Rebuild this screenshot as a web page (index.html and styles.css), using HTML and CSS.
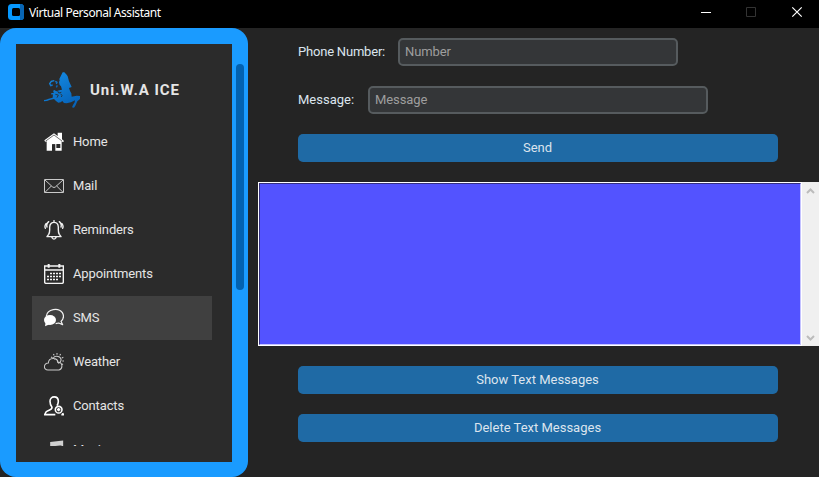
FILE: index.html
```html
<!DOCTYPE html>
<html lang="en">
<head>
<meta charset="utf-8">
<title>Virtual Personal Assistant</title>
<link rel="stylesheet" href="styles.css">
</head>
<body>
<header class="titlebar">
  <svg class="app-icon" viewBox="0 0 16 16"><rect width="16" height="16" rx="3.5" fill="#0698ff"/><path d="M12 0h.5A3.5 3.5 0 0 1 16 3.5v9a3.5 3.5 0 0 1-3.5 3.500H12z" fill="#0865b5"/><rect x="4" y="4" width="8" height="8" rx="1.500" fill="#000"/></svg>
  <h1 class="title">Virtual Personal Assistant</h1>
  <div class="controls">
    <svg viewBox="0 0 46 28"><path d="M11 12.500h10" stroke="#fff"/></svg>
    <svg viewBox="0 0 46 28"><path d="M10.500 7.500h9v9h-9z" fill="none" stroke="#333"/></svg>
    <svg viewBox="0 0 46 28"><path d="M10.300 7.300l9.400 9.400M19.700 7.300l-9.400 9.400" stroke="#fff" stroke-width="1.200"/></svg>
  </div>
</header>
<div class="window">
  <aside class="sidebar">
    <div class="panel">
      <div class="scroll-area">
        <div class="brand">
          <svg class="logo" viewBox="42 36 108 108">
            <defs><linearGradient id="g" x1="0" y1="0" x2="0.600" y2="1"><stop offset="0" stop-color="#168fe8"/><stop offset="1" stop-color="#0764ba"/></linearGradient></defs>
            <path fill="url(#g)" d="M98 37l5 0 7 7 3 5 4 15 8 17-8 3 3 9 4 7 1 10 15-3 13 1 1 4-5 6-7 6-6 13-4 6-6-1 3-7 5-8 1-6-12 6-13 3-8-1-5-6-5 4-7 1-7-5-6-6-13 3-8 3-10 1-2-3 9-2 8-3 12-3 1-10-4 1-2-4 9-2-3-5 4-3 6 4 9-3 8-2-3-10-4-4-2-9 2-4-1-5z"/>
            <path fill="none" stroke="url(#g)" stroke-width="4" d="M73 62l-9 2-5 7 3 6 6-2M76 64l5 3-2 5M82 76l-3 6"/>
            <path fill="none" stroke="#2b2b2b" stroke-width="2.500" d="M83 93l3 6 8-2M76 103l9 2-4 8M91 101l5 5-2 5"/>
          </svg>
          <span>Uni.W.A ICE</span>
        </div>
        <nav>
          <a class="item"><svg viewBox="0 0 60 60"><path fill="#fff" d="M1 25L30 4l11 8V2h13v20l6 5-3 4-4-3v28H34V37H24v19H8V28l-4 3z"/><path d="M4 28l26-19 24 18" fill="none" stroke="#2b2b2b" stroke-width="2"/><path d="M37 36h12v12H37z" fill="#2b2b2b"/><path d="M25 37h8v19h-8z" fill="#2b2b2b"/></svg>Home</a>
          <a class="item"><svg viewBox="0 0 60 60" fill="none" stroke="#c9c9c9" stroke-width="3"><path d="M1.500 10.500h57v39h-57zM3 12l23 21q4 3 8 0l23-21M3 49l19-19M57 49L38 30"/></svg>Mail</a>
          <a class="item"><svg viewBox="0 0 60 60" fill="none" stroke="#f0f0f0" stroke-width="4.200" stroke-linecap="round" stroke-linejoin="round"><path d="M30 2v4M14 43c4-7 3-11 3-21 0-20 26-20 26 0 0 10-1 14 3 21l5 7H9zM24 53q6 9 12 0M14 5Q6 11 9 21M46 5q8 6 5 16M6 11q-5 7-2 14M54 11q5 7 2 14"/></svg>Reminders</a>
          <a class="item"><svg viewBox="0 0 60 60" fill="none" stroke="#f5f5f5" stroke-width="4.200"><path d="M2 6h56v48q0 4-4 4H6q-4 0-4-4zM2 18h56"/><path d="M14 0v11M46 0v11" stroke-width="6"/><path stroke-dasharray="6 3" stroke-width="5" d="M18 28.500h36M9 37.500h45M9 46.500h33"/></svg>Appointments</a>
          <a class="item active"><svg viewBox="0 0 60 60"><path fill="none" stroke="#f2f2f2" stroke-width="3.600" stroke-linejoin="round" d="M7 24C10 3 43-3 55 14c7 11 2 20-4 26l5 10-12-5-9 2"/><ellipse cx="18" cy="36" rx="18" ry="15" fill="#fff"/><path d="M5 42L3 55l14-6z" fill="#fff"/></svg>SMS</a>
          <a class="item"><svg viewBox="0 0 60 60" fill="none" stroke="#c9c9c9" stroke-width="3.200"><path d="M12 54C-3 54-2 34 13 33c1-17 27-18 28-2 15-4 17 20 4 23zM28 18c6-10 25-4 23 7-1 5-5 8-9 9M30 22c6-3 13 3 11 10"/><path stroke-dasharray="5 3" d="M39 3v7M50 6l-4 6M58 16l-7 3M60 27h-7M57 38l-6-4M28 6l4 6M21 15l7 3"/></svg>Weather</a>
          <a class="item"><svg viewBox="0 0 60 60" fill="none" stroke="#fff" stroke-width="4.800" stroke-linejoin="round"><path d="M39 29c3-5 4-8 4-13 0-18-25-18-25 0 0 8 2 13 6 18 0 10-12 7-18 14l-4 8h32"/><circle cx="44" cy="41" r="10"/><path d="M44 36v10M39 41h10M52 56h6l-2-5"/></svg>Contacts</a>
          <a class="item"><svg viewBox="0 0 60 60" fill="none" stroke="#d0d0d0" stroke-width="5"><path d="M21 47V8l34-4v38M21 12l34-4M21 17l34-4"/><circle cx="12" cy="48" r="8"/><circle cx="47" cy="43" r="8"/></svg>Music</a>
        </nav>
      </div>
    </div>
    <div class="thumb"></div>
  </aside>
  <main>
    <label class="field phone">Phone Number:<input placeholder="Number"></label>
    <label class="field message">Message:<input placeholder="Message"></label>
    <button>Send</button>
    <div class="output">
      <div class="text"></div>
      <div class="scrollbar">
        <svg viewBox="0 0 9 6"><path d="M1 5l3.500-3.500L8 5"/></svg>
        <svg viewBox="0 0 9 6"><path d="M1 1l3.500 3.500L8 1"/></svg>
      </div>
    </div>
    <button>Show Text Messages</button>
    <button>Delete Text Messages</button>
  </main>
</div>
</body>
</html>
```

FILE: styles.css
```css
* { box-sizing: border-box; }
body {
  margin: 0;
  height: 477px;
  overflow: hidden;
  background: #242424;
  color: #dce4ee;
  font: 13px/16px Roboto, sans-serif;
}
svg { display: block; flex: none; }
.titlebar {
  display: flex;
  height: 28px;
  padding-left: 8px;
  background: #000;
  color: #fff;
}
.app-icon { width: 16px; height: 16px; margin-top: 4px; }
.title {
  margin: 5px 0 0 5px;
  font: 12px/16px "Noto Sans", sans-serif;
  letter-spacing: -0.44px;
}
.controls { display: flex; margin-left: auto; margin-right: -9px; }
.controls svg { width: 46px; height: 28px; }
.window { display: flex; height: 449px; }
.sidebar {
  display: flex;
  gap: 4px;
  width: 248px;
  flex: none;
  padding: 16px 4px 15px 16px;
  border-radius: 16px;
  background: #1a9bff;
}
.panel { width: 216px; padding: 16px; background: #2b2b2b; }
.scroll-area { height: 100%; overflow: hidden; }
.thumb { width: 8px; height: 226px; margin-top: 20px; border-radius: 4px; background: #0261b0; }
.brand {
  display: flex;
  align-items: center;
  gap: 10px;
  height: 60px;
  padding-left: 12px;
  font-size: 15px;
  font-weight: 700;
  letter-spacing: 0.95px;
  color: #e5e5e5;
}
.logo { width: 36px; height: 36px; }
.item {
  display: flex;
  align-items: center;
  gap: 9px;
  width: 180px;
  height: 44px;
  padding-left: 12px;
  color: #e5e5e5;
  letter-spacing: -0.15px;
}
.item svg { width: 20px; height: 20px; }
.item.active { background: #404040; }
main {
  display: flex;
  flex-direction: column;
  flex: 1;
  gap: 20px;
  padding: 10px 0 0 10px;
}
.field {
  display: flex;
  align-items: center;
  height: 28px;
  margin-left: 40px;
}
.field input {
  height: 28px;
  margin: 0 0 0 auto;
  padding: 0 5px 1px;
  border: 2px solid #565b5e;
  border-radius: 5px;
  background: #343638;
  font: inherit;
  letter-spacing: -0.1px;
}
.field input::placeholder { color: #9e9e9e; }
.phone { width: 380px; letter-spacing: -0.2px; }
.phone input { width: 280px; }
.message { width: 410px; }
.message input { width: 340px; }
button {
  width: 480px;
  height: 28px;
  margin-left: 40px;
  padding: 0 1px 1px 0;
  border: 0;
  border-radius: 5px;
  background: #1f6aa5;
  color: #dce4ee;
  font: inherit;
}
.output { display: flex; height: 164px; background: #fff; }
.text {
  width: 542px;
  margin: 1px 0 1px 1px;
  border: 1px solid;
  border-color: #343080 #c4c2ff #c4c2ff #343080;
  background: #5353ff;
}
.scrollbar {
  display: flex;
  flex-direction: column;
  justify-content: space-between;
  align-items: center;
  flex: 1;
  margin-left: 1px;
  padding: 6px 0 5px;
  background: #f0f0f0;
}
.scrollbar svg { width: 9px; height: 6px; fill: none; stroke: #bcbcbc; stroke-width: 2; }
```
